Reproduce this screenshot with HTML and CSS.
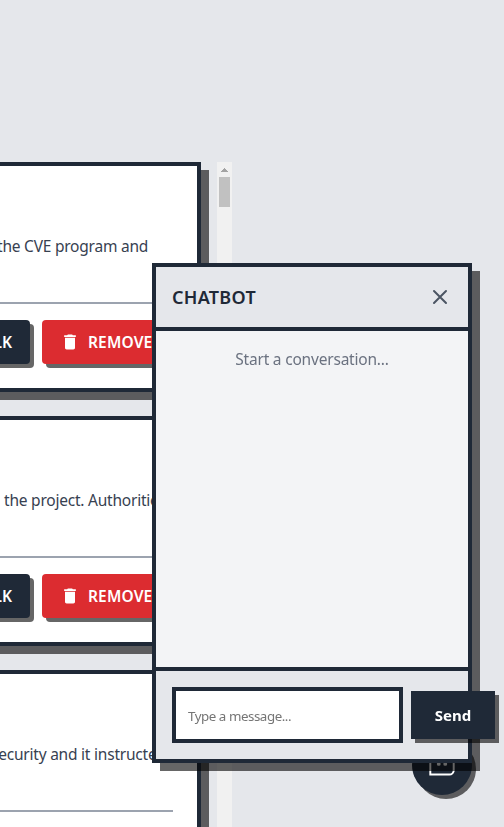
FILE: index.html
```html
<!DOCTYPE html>
<html lang="en">
<head>
<meta charset="utf-8">
<title>Chatbot</title>
<link rel="stylesheet" href="styles.css">
</head>
<body>
<main class="page">
  <div class="list">
    <article class="card">
      <p class="text"><span class="t1">the CVE program and</span></p>
      <div class="actions">
        <button class="btn talk">TALK</button>
        <button class="btn remove"><svg viewBox="0 0 24 24"><path d="M6 19c0 1.1.9 2 2 2h8c1.1 0 2-.9 2-2V7H6v12zM19 4h-3.5l-1-1h-5l-1 1H5v2h14V4z"/></svg><span>REMOVE</span></button>
      </div>
    </article>
    <article class="card">
      <p class="text"><span class="t2">the project. Authorities</span></p>
      <div class="actions">
        <button class="btn talk">TALK</button>
        <button class="btn remove"><svg viewBox="0 0 24 24"><path d="M6 19c0 1.1.9 2 2 2h8c1.1 0 2-.9 2-2V7H6v12zM19 4h-3.5l-1-1h-5l-1 1H5v2h14V4z"/></svg><span>REMOVE</span></button>
      </div>
    </article>
    <article class="card">
      <p class="text"><span class="t3">security and it instructed</span></p>
      <div class="actions"></div>
    </article>
  </div>
  <div class="scrollbar"><svg class="arrow" viewBox="0 0 7 4" shape-rendering="crispEdges"><path d="M3 0h1v1h1v1h1v1h1v1H0V3h1V2h1V1h1z"/></svg><div class="thumb"></div></div>
</main>

<button class="fab" aria-label="Open chat">
  <svg viewBox="0 0 24 24"><path d="M1.2 20.8V7a4 4 0 0 1 4-4h13.6a4 4 0 0 1 4 4v9.8a4 4 0 0 1-4 4z" fill="none" stroke="#fff" stroke-width="1.8"/><circle cx="9" cy="11" r="1.8" fill="#fff"/><circle cx="15" cy="11" r="1.8" fill="#fff"/></svg>
</button>

<section class="chat">
  <header class="chat-head">
    <h2><span>CHATBOT</span></h2>
    <svg class="close" viewBox="0 0 24 24"><path d="M6 6l12 12M18 6L6 18"/></svg>
  </header>
  <div class="chat-body"><p><span>Start a conversation...</span></p></div>
  <footer class="chat-foot">
    <div class="field"><span>Type a message...</span></div>
    <button class="send"><span>Send</span></button>
  </footer>
</section>
</body>
</html>
```
FILE: styles.css
```css
* { box-sizing: border-box; margin: 0; }
html, body { height: 827px; overflow: hidden; }
body {
  background: #e5e7eb;
  color: #1f2937;
  font-family: "Noto Sans", sans-serif;
  font-size: 15.5px;
  line-height: 24px;
}
button { font: inherit; border: 0; padding: 0; }
.page { display: flex; align-items: flex-start; height: 827px; padding-top: 162px; overflow: hidden; }
.list { display: flex; flex-direction: column; gap: 24px; width: 217px; flex: none; height: 665px; }
.card {
  flex: none;
  width: 225px;
  height: 230px;
  margin-left: -24px;
  padding: 68px 24px 0 20px;
  border: 4px solid #1f2937;
  background: #fff;
  box-shadow: 8px 8px 0 rgba(0, 0, 0, .6);
}
.text { height: 68px; white-space: nowrap; color: #374151; }
.text span { display: inline-block; letter-spacing: -.22px; }
.t1 { margin-left: -3px; }
.t2 { margin-left: 4px; }
.t3 { margin-left: -9px; }
.actions { display: flex; gap: 12px; height: 62px; padding-top: 16px; border-top: 2px solid #9ca3af; }
.btn {
  flex: none;
  display: flex;
  align-items: center;
  height: 44px;
  border-radius: 4px;
  color: #fff;
  font-weight: 600;
  box-shadow: 4px 4px 0 rgba(0, 0, 0, .6);
}
.talk { width: 50px; margin-left: -20px; padding-right: 18px; justify-content: flex-end; background: #1f2937; }
.remove { width: 131px; padding-left: 18px; letter-spacing: .15px; background: #dc2c30; }
.remove svg { width: 20px; height: 20px; margin-right: 8px; fill: #fff; }
.scrollbar { width: 15px; height: 665px; flex: none; background: #f1f1f1; display: flex; flex-direction: column; align-items: center; }
.arrow { width: 7px; height: 4px; margin: 6px 0 5px; fill: #a3a3a3; }
.thumb { width: 11px; height: 30px; background: #c1c1c1; }
.fab {
  position: fixed;
  left: 412px;
  top: 735px;
  width: 60px;
  height: 60px;
  display: grid;
  place-items: center;
  border-radius: 50%;
  background: #1f2937;
  box-shadow: 4px 4px 0 rgba(0, 0, 0, .6);
}
.fab svg { width: 26px; height: 26px; }
.chat {
  position: fixed;
  left: 152px;
  top: 263px;
  width: 320px;
  height: 500px;
  display: flex;
  flex-direction: column;
  border: 4px solid #1f2937;
  background: #f3f4f6;
  box-shadow: 8px 8px 0 rgba(0, 0, 0, .6);
}
.chat-head {
  display: flex;
  align-items: center;
  justify-content: space-between;
  height: 64px;
  padding: 0 16px;
  border-bottom: 4px solid #1f2937;
  background: #e5e7eb;
}
.chat-head h2 { font-size: 18px; line-height: 28px; font-weight: 600; letter-spacing: .3px; }
.close { width: 24px; height: 24px; fill: none; stroke: #4b5563; stroke-width: 2; stroke-linecap: round; }
.chat-body { flex: 1; padding: 16px; text-align: center; color: #6b7280; }
.chat-body span { letter-spacing: -.2px; }
.chat-foot { display: flex; align-items: center; gap: 8px; height: 92px; padding: 0 16px; border-top: 4px solid #1f2937; background: #e5e7eb; }
.field { flex: none; display: flex; align-items: center; width: 231px; height: 56px; padding: 2px 0 0 12px; border: 4px solid #1f2937; background: #fff; color: #757575; font-size: 13.33px; }
.field span { letter-spacing: -.45px; }
.send { flex: none; width: 84px; height: 48px; background: #1f2937; color: #fff; font-size: 15px; font-weight: 700; box-shadow: 4px 4px 0 rgba(0, 0, 0, .6); }
```
